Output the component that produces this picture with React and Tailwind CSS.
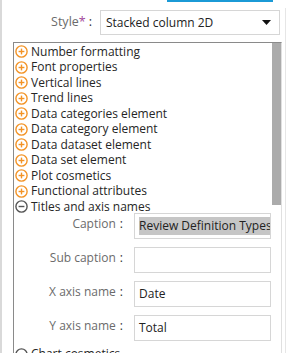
const FONT = { fontFamily: '"Open Sans", "Liberation Sans", sans-serif' }

const SECTIONS = [
  'Number formatting',
  'Font properties',
  'Vertical lines',
  'Trend lines',
  'Data categories element',
  'Data category element',
  'Data dataset element',
  'Data set element',
  'Plot cosmetics',
  'Functional attributes',
]

const FIELDS = [
  { label: 'Caption', value: 'Review Definition Types', selected: true },
  { label: 'Sub caption', value: '' },
  { label: 'X axis name', value: 'Date' },
  { label: 'Y axis name', value: 'Total' },
]

function ToggleIcon({ open }) {
  const c = open ? '#555555' : '#f39325'
  return (
    <svg width="13" height="13" viewBox="0 0 13 13" className="shrink-0">
      <circle cx="6.5" cy="6.5" r="5.6" fill="none" stroke={c} strokeWidth="1.4" />
      <path d="M3.6 6.5h5.8" stroke={c} strokeWidth="1.4" />
      {!open && <path d="M6.5 3.6v5.8" stroke={c} strokeWidth="1.4" />}
    </svg>
  )
}

function SectionRow({ title, open }) {
  return (
    <div className="flex items-center gap-[3px] h-[15.5px] pl-px">
      <ToggleIcon open={open} />
      <span className="text-[12px] leading-none text-[#262626] whitespace-nowrap">{title}</span>
    </div>
  )
}

function FieldRow({ field }) {
  return (
    <div className="flex items-center h-[26px]">
      <div className="w-[109px] pb-[4px] text-right text-[12px] text-[#6b6b6b] whitespace-nowrap">
        {field.label}<span className="text-[#333] ml-[4px]">:</span>
      </div>
      <div className="ml-[11px] w-[137px] h-[26px] border border-[#d6d6d6] flex items-center px-[4px] overflow-hidden">
        <span className={`text-[12px] text-[#222] whitespace-nowrap ${field.selected ? 'bg-[#c6c6c6]' : ''}`}>{field.value}</span>
      </div>
    </div>
  )
}

export default function App() {
  return (
    <div className="w-[290px] h-[353px] overflow-hidden bg-white flex" style={FONT}>
      <div className="w-[2px] bg-[#d9d9d9] shrink-0" />
      <div className="w-[280px] shrink-0 flex flex-col">
        <div className="h-[2px] ml-[165px] w-[106px] bg-[#1b9ad6]" />
        <div className="flex items-center mt-[8px] h-[25px]">
          <div className="w-[90px] text-right text-[12.5px] text-[#6b6b6b] whitespace-nowrap">
            Style<span className="text-[#a3479b]">*</span><span className="text-[#333] ml-[3px]">:</span>
          </div>
          <div className="ml-[8px] w-[180px] h-[25px] border border-[#d6d6d6] flex items-center pl-[5px] pr-[8px]">
            <span className="flex-1 text-[12px] text-[#222] whitespace-nowrap">Stacked column 2D</span>
            <svg width="9" height="5" viewBox="0 0 9 5"><path d="M0 0h9L4.5 5z" fill="#111" /></svg>
          </div>
        </div>
        <div className="mt-[7px] ml-[11px] flex-1 flex border-t border-l border-[#8a8a8a] border-r-[#e0e0e0] border-r min-h-0">
          <div className="flex-1 pt-px">
            {SECTIONS.map(s => <SectionRow key={s} title={s} />)}
            <SectionRow title="Titles and axis names" open />
            <div className="flex flex-col gap-[8px] -mt-[2px]">
              {FIELDS.map(f => <FieldRow key={f.label} field={f} />)}
            </div>
            <div className="mt-[6px]">
              <SectionRow title="Chart cosmetics" open />
            </div>
          </div>
          <div className="w-[9px] shrink-0">
            <div className="h-[162px] bg-[#ababab]" />
          </div>
        </div>
      </div>
      <div className="w-[3px] shrink-0" />
      <div className="w-px shrink-0 mt-[8px] bg-[#e6e6e6]" />
    </div>
  )
}
